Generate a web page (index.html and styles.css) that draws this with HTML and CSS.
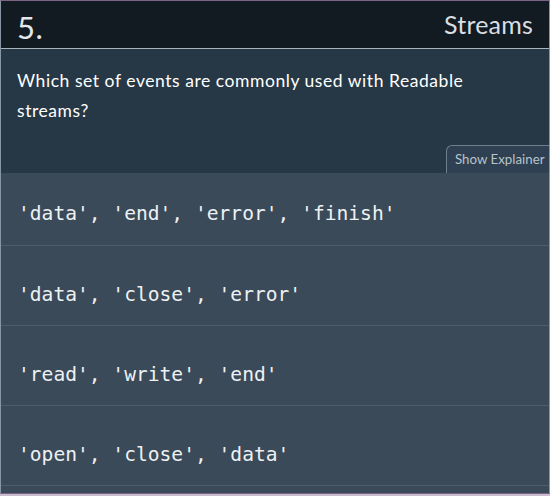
FILE: index.html
```html
<!DOCTYPE html>
<html>
<head>
<meta charset="utf-8">
<link rel="stylesheet" href="styles.css">
</head>
<body>
<div class="card">
  <header class="head">
    <span class="num">5.</span>
    <span class="topic">Streams</span>
  </header>
  <section class="question">
    <p class="qtext">Which set of events are commonly used with Readable streams?</p>
    <div class="tabrow"><span class="tab">Show Explainer</span></div>
  </section>
  <ul class="options">
    <li class="opt first">'data', 'end', 'error', 'finish'</li>
    <li class="opt">'data', 'close', 'error'</li>
    <li class="opt">'read', 'write', 'end'</li>
    <li class="opt">'open', 'close', 'data'</li>
  </ul>
</div>
</body>
</html>
```
FILE: styles.css
```css
html, body { margin: 0; padding: 0; }
body {
  width: 550px;
  height: 496px;
  background: #c9bccf;
  overflow: hidden;
  font-family: "Lato", "Open Sans", sans-serif;
}
.card {
  border-top: 1px solid #7b6386;
  border-left: 1px solid #8796a2;
  border-right: 1px solid #8796a2;
  border-bottom: 1px solid #7b6386;
  height: 492px;
  background: #3a4a59;
}
.head {
  height: 47px;
  background: #121a22;
  border-bottom: 1px solid #a8b3bb;
  display: flex;
  align-items: center;
  justify-content: space-between;
  padding: 0 16px 0 16px;
  color: #e3e7ea;
}
.num { font-size: 31px; line-height: 1; margin-top: 5px; letter-spacing: 0.5px; }
.topic { font-size: 25px; line-height: 1; margin-top: 0; color: #d9dee2; letter-spacing: 0.2px; }
.question {
  background: #263846;
  height: 124px;
  display: flex;
  flex-direction: column;
  justify-content: space-between;
}
.qtext {
  margin: 0;
  padding: 17px 70px 0 16px;
  color: #ffffff;
  font-size: 17.5px;
  letter-spacing: 0.55px;
  line-height: 30px;
}
.tabrow { display: flex; justify-content: flex-end; }
.tab {
  background: #2e4051;
  border: 1px solid #6e7f8d;
  border-bottom: none;
  border-right: none;
  border-radius: 6px 0 0 0;
  color: #b8c3cb;
  font-size: 13.3px;
  height: 27px;
  line-height: 27px;
  padding: 0 0 0 8px;
  width: 94px;
  white-space: nowrap;
}
.options { list-style: none; margin: 0; padding: 0; }
.opt {
  font-family: "DejaVu Sans Mono", monospace;
  font-size: 19.6px;
  color: #eef1f3;
  border-bottom: 1px solid #4c5d6c;
  padding: 18px 0 0 17px;
  height: 61px;
  display: flex;
  align-items: center;
}
.opt.first { height: 64px; padding-top: 8px; }
```
